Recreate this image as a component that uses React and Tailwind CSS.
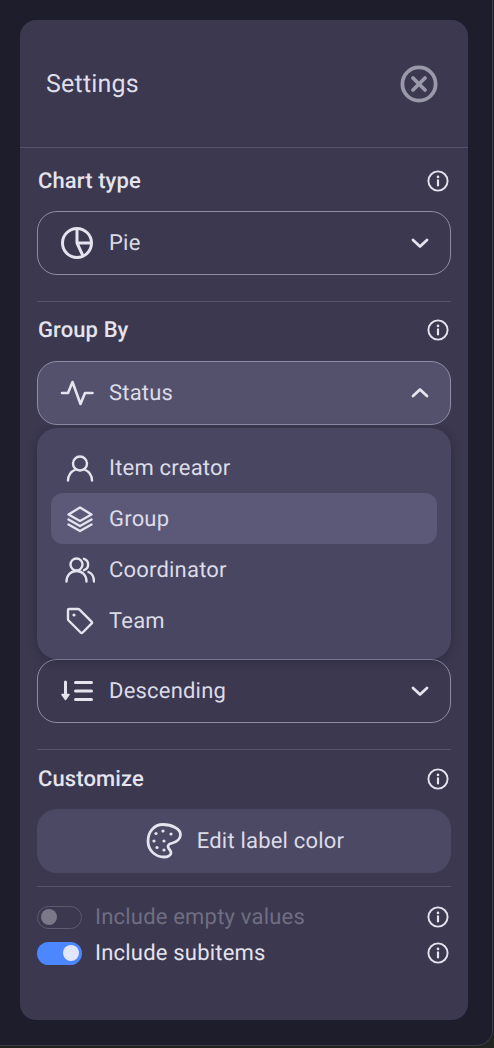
import React from "react";

const Info = () => (
  <svg width="22" height="22" viewBox="0 0 22 22" fill="none" stroke="#e4e3ee" strokeWidth="1.9" strokeLinecap="round">
    <circle cx="11" cy="11" r="9.6" />
    <path d="M11 10.400v5" strokeWidth="2.200" />
    <circle cx="11" cy="6.900" r="1.300" fill="#e4e3ee" stroke="none" />
  </svg>
);

const Chevron = ({ up }) => (
  <svg width="20" height="20" viewBox="0 0 20 20" fill="none" stroke="#e4e3ee" strokeWidth="2.800" strokeLinecap="round" strokeLinejoin="round">
    <path d={up ? "M3 13l7-6.500 7 6.500" : "M3 7l7 6.500 7-6.500"} />
  </svg>
);

const PieIcon = () => (
  <svg width="34" height="34" viewBox="0 0 34 34" fill="none" stroke="#e4e3ee" strokeWidth="3" strokeLinejoin="round">
    <circle cx="17" cy="17" r="14.500" />
    <path d="M17 2.500V17h14.500M17 17l6 13" />
  </svg>
);

const Activity = () => (
  <svg width="34" height="28" viewBox="0 0 34 28" fill="none" stroke="#e4e3ee" strokeWidth="2.600" strokeLinecap="round" strokeLinejoin="round">
    <path d="M2 14h6L12.500 3l8 22L25 14h7.500" />
  </svg>
);

const User = () => (
  <svg width="28" height="28" viewBox="0 0 28 28" fill="none" stroke="#e4e3ee" strokeWidth="2.400" strokeLinecap="round">
    <circle cx="14" cy="9.500" r="7" />
    <path d="M2 26.500c0-5 3-9 7.500-11M26 26.500c0-5-3-9-7.500-11" />
  </svg>
);

const Layers = () => (
  <svg width="28" height="28" viewBox="0 0 28 28" fill="none" stroke="#e4e3ee" strokeWidth="2.400" strokeLinecap="round" strokeLinejoin="round">
    <path d="M14 2.500L2.500 9.500 14 16l11.500-6.500L14 2.500z" />
    <path d="M2.500 14.500L14 21l11.500-6.500" />
    <path d="M2.500 19.500L14 26l11.500-6.500" />
  </svg>
);

const Users = () => (
  <svg width="30" height="28" viewBox="0 0 30 28" fill="none" stroke="#e4e3ee" strokeWidth="2.400" strokeLinecap="round">
    <circle cx="11.500" cy="8.500" r="6" />
    <path d="M1.500 25.500c0-6 4-10.500 10-10.500s10 4.500 10 10.500" />
    <path d="M19 2.800a6 6 0 0 1 0 11.400M23.500 16c3.500 1.500 5.500 5 5.500 9.500" />
  </svg>
);

const Tag = () => (
  <svg width="28" height="28" viewBox="0 0 28 28" fill="none" stroke="#e4e3ee" strokeWidth="2.400" strokeLinecap="round" strokeLinejoin="round">
    <path d="M2 3c0-.6.400-1 1-1h9c.6 0 1.100.2 1.500.6l12 12c.6.600.6 1.500 0 2.100l-8.800 8.800c-.6.600-1.500.6-2.100 0l-12-12C2.200 13.100 2 12.600 2 12V3z" />
    <circle cx="8" cy="8" r="1.600" fill="#e4e3ee" stroke="none" />
  </svg>
);

const SortDesc = () => (
  <svg width="34" height="24" viewBox="0 0 34 24" fill="none" stroke="#e4e3ee" strokeLinecap="round" strokeLinejoin="round">
    <path d="M5.500 3v14" strokeWidth="3" />
    <path d="M2 15.500L5.500 20.500l3.500-5z" fill="#e4e3ee" strokeWidth="1.500" />
    <path d="M15.500 3.500h16M15.500 12h16M15.500 20.500h16" strokeWidth="3" />
  </svg>
);

const Palette = () => (
  <svg width="36" height="36" viewBox="0 0 36 36" fill="none" stroke="#e4e3ee" strokeWidth="2.800" strokeLinejoin="round">
    <path d="M17 1.500C8 1.500 2 9 2 18s7 16 16 16c3.500 0 7-1.500 7-4 0-3-3-4-3-6.500 0-2.500 2-3 4.500-3.500 4-1 8-4 8-8.500C34.500 6 26 1.500 17 1.500z" />
    <g fill="#e4e3ee" stroke="none">
      <circle cx="17" cy="8" r="1.600" />
      <circle cx="10" cy="10.500" r="1.600" />
      <circle cx="25" cy="11" r="1.600" />
      <circle cx="8" cy="18" r="1.600" />
      <circle cx="18" cy="18" r="1.600" />
      <circle cx="11" cy="24.500" r="1.600" />
      <circle cx="18" cy="27" r="1.600" />
    </g>
  </svg>
);

const Close = () => (
  <svg width="38" height="38" viewBox="0 0 38 38" fill="none" stroke="#9a99aa" strokeWidth="3.800" strokeLinecap="round">
    <circle cx="19" cy="19" r="16.600" />
    <path d="M13 13l12 12M25 13L13 25" />
  </svg>
);

const SectionHead = ({ title }) => (
  <div className="flex items-center justify-between pl-[1px] pr-[2px] h-[24px]">
    <span className="text-[22px] font-medium text-[#e4e3ee] leading-[24px] tracking-[0.1px] pt-[2px]">{title}</span>
    <Info />
  </div>
);

const Select = ({ icon, label, up, open }) => (
  <div className={`flex items-center h-[64px] rounded-[20px] border border-[#8f8ca8] pl-[21px] pr-[20px] ${open ? "bg-[#53516c]" : ""}`}>
    <span className="w-[36px] flex items-center justify-center shrink-0">{icon}</span>
    <span className="ml-[14px] flex-1 text-[22px] text-[#dcdbe8] tracking-[0.2px]">{label}</span>
    <Chevron up={up} />
  </div>
);

const Item = ({ icon, label, active }) => (
  <div className={`flex items-center h-[51px] rounded-[12px] pl-[12px] ${active ? "bg-[#5b5977]" : ""}`}>
    <span className="w-[34px] flex items-center justify-center shrink-0">{icon}</span>
    <span className="ml-[12px] text-[22px] text-[#dcdbe8] tracking-[0.2px] pt-[2px]">{label}</span>
  </div>
);

const Toggle = ({ on }) => (
  <div className={`w-[45px] h-[23px] rounded-full flex items-center shrink-0 ${on ? "bg-[#4c87ff] justify-end pr-[3px]" : "border border-[#5d5b70] pl-[3px]"}`}>
    <span className={`w-[16px] h-[16px] rounded-full ${on ? "bg-[#e2e6fb]" : "bg-[#7a7889]"}`} />
  </div>
);

export default function App() {
  return (
    <div className="w-[494px] h-[1048px] bg-[#20261f] overflow-hidden [text-rendering:geometricPrecision]" style={{ fontFamily: "Roboto, sans-serif" }}>
      <div className="w-[493px] h-[1046px] bg-[#1e1d2b] rounded-br-[16px] border-r border-b border-[#3a3946] pt-[20px] pl-[20px]">
        <div className="w-[448px] h-[1000px] rounded-[16px] bg-[#3b384f]">
          <div className="h-[128px] border-b border-[#55536b] flex items-center justify-between pl-[26px] pr-[30px]">
            <span className="text-[25px] text-[#dfdeea] tracking-[0.2px] pt-[2px]">Settings</span>
            <Close />
          </div>
          <div className="pl-[17px] pr-[17px] pt-[21px]">
            <SectionHead title="Chart type" />
            <div className="mt-[18px]">
              <Select icon={<PieIcon />} label="Pie" />
            </div>
            <div className="mt-[26px] border-t border-[#55536b]" />
            <div className="mt-[16px]"><SectionHead title="Group By" /></div>
            <div className="relative mt-[19px]">
              <Select icon={<Activity />} label="Status" up open />
              <div className="absolute z-10 left-0 right-0 top-[67px] h-[231px] rounded-[20px] bg-[#484660] shadow-[0_2px_10px_rgba(20,18,35,0.3)] p-[14px]">
                <Item icon={<User />} label="Item creator" />
                <Item icon={<Layers />} label="Group" active />
                <Item icon={<Users />} label="Coordinator" />
                <Item icon={<Tag />} label="Team" />
              </div>
            </div>
            <div className="mt-[234px]">
              <Select icon={<SortDesc />} label="Descending" />
            </div>
            <div className="mt-[26px] border-t border-[#55536b]" />
            <div className="mt-[17px]"><SectionHead title="Customize" /></div>
            <div className="mt-[18px] h-[64px] rounded-[20px] bg-[#4b4964] flex items-center justify-center gap-[15px] pl-[2px]">
              <Palette />
              <span className="text-[22px] text-[#dcdbe8] tracking-[0.2px]">Edit label color</span>
            </div>
            <div className="mt-[13px] border-t border-[#55536b]" />
            <div className="mt-[18px] flex items-center h-[24px] pr-[2px]">
              <Toggle />
              <span className="ml-[13px] flex-1 text-[22px] text-[#706e82] tracking-[0.2px]">Include empty values</span>
              <Info />
            </div>
            <div className="mt-[12px] flex items-center h-[24px] pr-[2px]">
              <Toggle on />
              <span className="ml-[13px] flex-1 text-[22px] text-[#e4e3ee] tracking-[0.2px]">Include subitems</span>
              <Info />
            </div>
          </div>
        </div>
      </div>
    </div>
  );
}
